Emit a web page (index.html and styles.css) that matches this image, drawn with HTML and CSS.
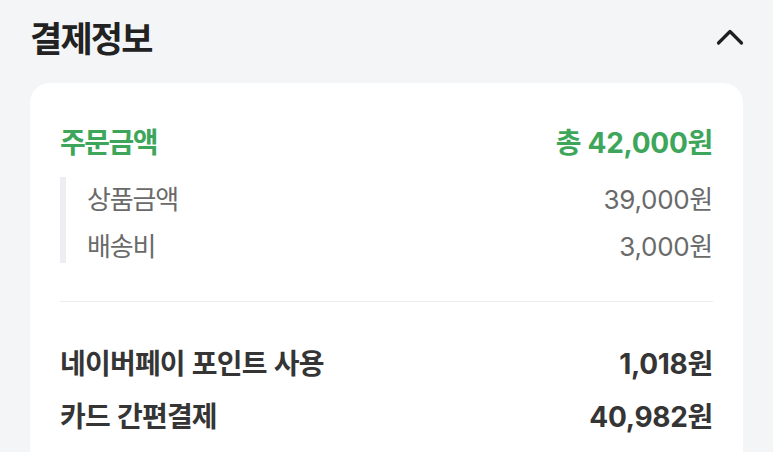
FILE: index.html
```html
<!DOCTYPE html>
<html lang="ko">
<head>
<meta charset="utf-8">
<link rel="stylesheet" href="styles.css">
</head>
<body>
<div class="page">
  <div class="header">
    <h2 class="title">결제정보</h2>
    <svg class="chevron" width="28" height="18" viewBox="0 0 28 18">
      <path d="M2.5 15 L14 3.5 L25.5 15" fill="none" stroke="#1f1f1f" stroke-width="3.2" stroke-linecap="round" stroke-linejoin="round"/>
    </svg>
  </div>
  <div class="card">
    <div class="row total">
      <span class="label">주문금액</span>
      <span class="amount">총 42,000원</span>
    </div>
    <div class="detail">
      <div class="row sub">
        <span class="label">상품금액</span>
        <span class="amount">39,000원</span>
      </div>
      <div class="row sub">
        <span class="label">배송비</span>
        <span class="amount">3,000원</span>
      </div>
    </div>
    <div class="divider"></div>
    <div class="pay">
      <div class="row main">
        <span class="label">네이버페이 포인트 사용</span>
        <span class="amount">1,018원</span>
      </div>
      <div class="row main">
        <span class="label">카드 간편결제</span>
        <span class="amount">40,982원</span>
      </div>
    </div>
  </div>
</div>
</body>
</html>
```

FILE: styles.css
```css
html, body {
  margin: 0;
  padding: 0;
  background: #f4f5f7;
  font-family: "Noto Sans CJK KR", "Noto Sans", sans-serif;
  overflow: hidden;
}
.page {
  padding: 0 30px;
}
.header {
  display: flex;
  justify-content: space-between;
  align-items: center;
  height: 46px;
  padding-top: 14px;
}
.title {
  margin: 0;
  font-size: 35px;
  font-weight: 700;
  color: #222;
  letter-spacing: -1.8px;
  line-height: 46px;
}
.chevron {
  display: block;
  margin-right: -1px;
}
.card {
  margin-top: 23px;
  background: #fff;
  border-radius: 20px;
  padding: 42px 30px 40px;
  min-height: 400px;
}
.row {
  display: flex;
  justify-content: space-between;
  align-items: center;
}
.amount {
  font-family: "Inter", "Noto Sans CJK KR", sans-serif;
  letter-spacing: -0.3px;
}
.total {
  height: 32px;
  font-size: 28px;
  font-weight: 700;
  color: #3da65a;
}
.total .label {
  letter-spacing: -1.5px;
}
.detail {
  margin-top: 20px;
  border-left: 6px solid #eceef1;
  padding: 5px 0 4px 21px;
  display: flex;
  flex-direction: column;
  gap: 17px;
}
.sub {
  height: 30px;
  font-size: 26px;
  color: #6a6a6a;
}
.sub .label {
  letter-spacing: -1.2px;
}
.divider {
  margin-top: 38px;
  height: 1px;
  background: #ececec;
}
.pay {
  margin-top: 44px;
  display: flex;
  flex-direction: column;
  gap: 21px;
}
.main {
  height: 32px;
  font-size: 28px;
  font-weight: 700;
  color: #353535;
}
.main .label {
  letter-spacing: -0.8px;
}
```
